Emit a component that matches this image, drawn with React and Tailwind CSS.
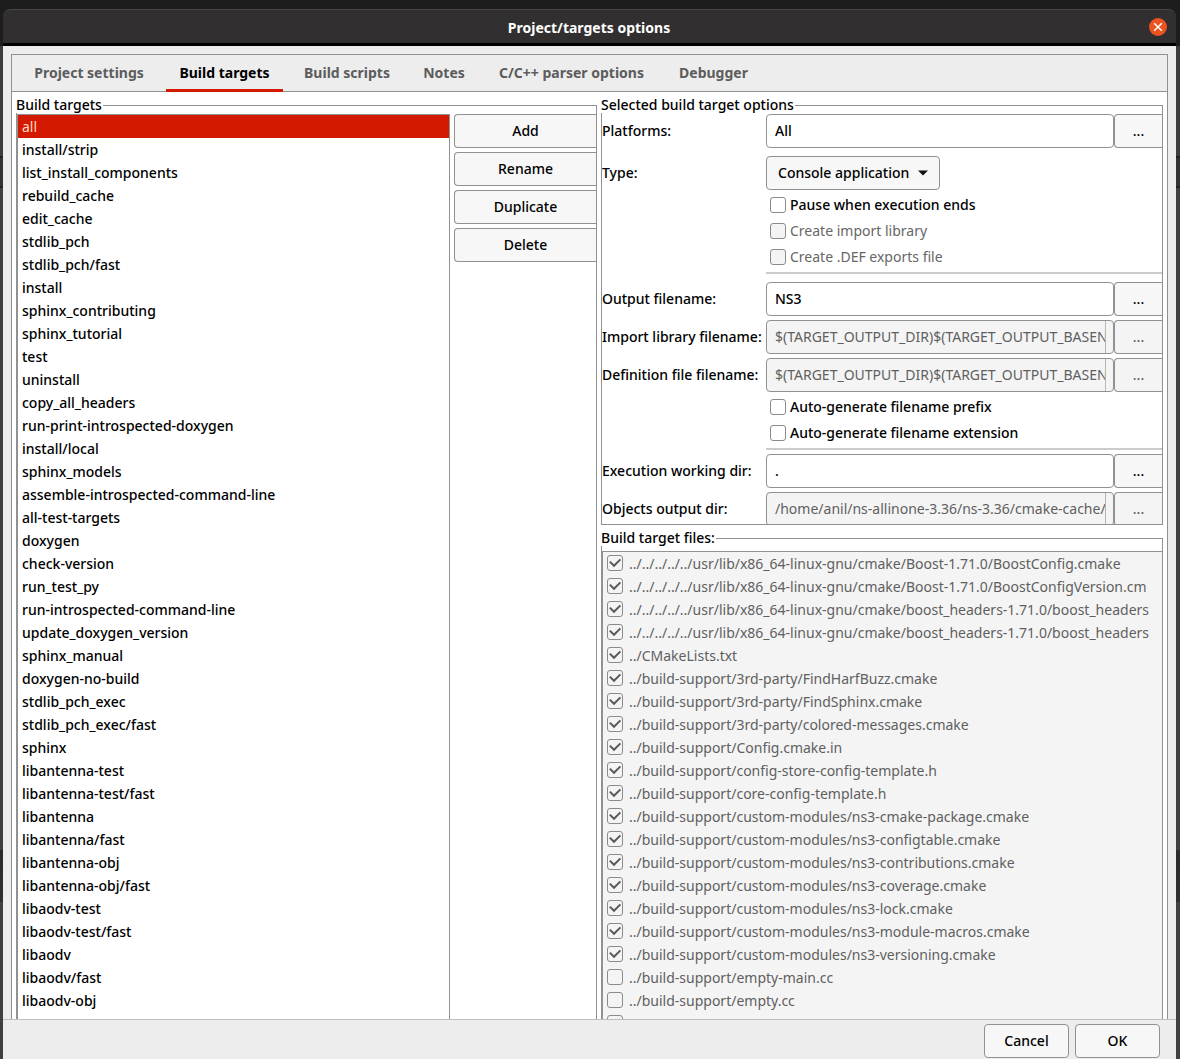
import { useState } from "react";

const TABS = [
  { name: "Project settings", width: "w-[138px]" },
  { name: "Build targets", width: "w-[117px]" },
  { name: "Build scripts", width: "w-[112px]" },
  { name: "Notes", width: "w-[66px]" },
  { name: "C/C++ parser options", width: "w-[173px]" },
  { name: "Debugger", width: "w-[95px]" },
];

const TARGETS = [
  "all", "install/strip", "list_install_components", "rebuild_cache", "edit_cache",
  "stdlib_pch", "stdlib_pch/fast", "install", "sphinx_contributing", "sphinx_tutorial",
  "test", "uninstall", "copy_all_headers", "run-print-introspected-doxygen",
  "install/local", "sphinx_models", "assemble-introspected-command-line",
  "all-test-targets", "doxygen", "check-version", "run_test_py",
  "run-introspected-command-line", "update_doxygen_version", "sphinx_manual",
  "doxygen-no-build", "stdlib_pch_exec", "stdlib_pch_exec/fast", "sphinx",
  "libantenna-test", "libantenna-test/fast", "libantenna", "libantenna/fast",
  "libantenna-obj", "libantenna-obj/fast", "libaodv-test", "libaodv-test/fast",
  "libaodv", "libaodv/fast", "libaodv-obj",
];

const FILES = [
  "../../../../../usr/lib/x86_64-linux-gnu/cmake/Boost-1.71.0/BoostConfig.cmake",
  "../../../../../usr/lib/x86_64-linux-gnu/cmake/Boost-1.71.0/BoostConfigVersion.cm",
  "../../../../../usr/lib/x86_64-linux-gnu/cmake/boost_headers-1.71.0/boost_headers",
  "../../../../../usr/lib/x86_64-linux-gnu/cmake/boost_headers-1.71.0/boost_headers",
  "../CMakeLists.txt",
  "../build-support/3rd-party/FindHarfBuzz.cmake",
  "../build-support/3rd-party/FindSphinx.cmake",
  "../build-support/3rd-party/colored-messages.cmake",
  "../build-support/Config.cmake.in",
  "../build-support/config-store-config-template.h",
  "../build-support/core-config-template.h",
  "../build-support/custom-modules/ns3-cmake-package.cmake",
  "../build-support/custom-modules/ns3-configtable.cmake",
  "../build-support/custom-modules/ns3-contributions.cmake",
  "../build-support/custom-modules/ns3-coverage.cmake",
  "../build-support/custom-modules/ns3-lock.cmake",
  "../build-support/custom-modules/ns3-module-macros.cmake",
  "../build-support/custom-modules/ns3-versioning.cmake",
  "../build-support/empty-main.cc",
  "../build-support/empty.cc",
  "",
];
const UNCHECKED = [18, 19];

function Tick({ id, disabled, checked, label }) {
  return (
    <span className="grid size-4 shrink-0">
      <input
        id={id}
        type="checkbox"
        disabled={disabled}
        defaultChecked={checked}
        aria-label={label}
        className="peer col-start-1 row-start-1 size-4 appearance-none rounded-[3px] border border-[#8b8b8b] bg-white disabled:bg-[#f4f4f4]"
      />
      <svg
        viewBox="0 0 16 16"
        className="pointer-events-none invisible col-start-1 row-start-1 size-4 peer-checked:visible"
        fill="none"
        stroke="#5a5a5a"
        strokeWidth="2"
        aria-hidden="true"
      >
        <path d="M2.8 6.6 7 10.8 13.4 4.4" />
      </svg>
    </span>
  );
}

function CheckRow({ id, disabled, children }) {
  return (
    <div className={"flex h-[26px] items-center gap-1 pl-1 " + (disabled ? "font-normal text-[#666666]" : "")}>
      <Tick id={id} disabled={disabled} />
      <label htmlFor={id}>{children}</label>
    </div>
  );
}

function FieldRow({ id, label, value, disabled }) {
  return (
    <div className="flex h-[34px] items-center">
      <label htmlFor={id} className="w-[164px] shrink-0 whitespace-nowrap">{label}</label>
      <div
        className={
          "flex h-[34px] min-w-0 flex-1 rounded border border-[#919191] pl-2 " +
          (disabled ? "bg-[#f4f4f4] pr-[7px] font-normal text-[#5f5f5f]" : "bg-white pr-2")
        }
      >
        <input
          id={id}
          defaultValue={value}
          disabled={disabled}
          className={"w-full min-w-0 bg-transparent outline-none " + (disabled ? "border-r border-[#b5b5b5]" : "")}
        />
      </div>
      <button
        type="button"
        disabled={disabled}
        aria-label={"Browse: " + label}
        className="h-[34px] w-12 shrink-0 rounded-l border border-r-0 border-[#919191] bg-[#f7f7f7] disabled:bg-[#f4f4f4] disabled:text-[#5f5f5f]"
      >
        ...
      </button>
    </div>
  );
}

function Separator() {
  return <div className="ml-[164px] h-0.5 bg-[#cccccc]" />;
}

function Frame({ title, className, children }) {
  return (
    <fieldset className={"min-w-0 border border-[#919191] " + className}>
      <legend className="-ml-px pr-px leading-4">{title}</legend>
      {children}
    </fieldset>
  );
}

export default function App() {
  const [selected, setSelected] = useState("all");
  const [tab, setTab] = useState("Build targets");

  return (
    <div className="flex h-screen flex-col overflow-hidden bg-[linear-gradient(#1d1d1d_46px,#3d3d3d_46px,#3d3d3d_156px,#222_156px,#222_158px,#333_158px,#333_186px,#222_186px,#222_188px,#3f4040_188px,#3f4040_850px,#2a2a2a_850px,#303030_902px,#3f4040_902px)] pt-[9px] pr-1 pl-[3px] font-['Noto_Sans','Liberation_Sans',sans-serif] text-sm font-medium text-black">
      <header className="grid h-[37px] shrink-0 grid-cols-[1fr_auto_1fr] items-center rounded-t-lg border-t border-b-[3px] border-t-[#484848] border-b-black bg-[#322f30] pr-[9px]">
        <h1 className="col-start-2 pt-0.5 pl-2 font-bold text-white">Project/targets options</h1>
        <button type="button" aria-label="Close" className="flex size-[18px] items-center justify-center justify-self-end rounded-full bg-[#e95420]">
          <svg viewBox="0 0 10 10" className="size-[10px]" stroke="#fff" strokeWidth="1.5" aria-hidden="true">
            <path d="M1.2 1.2 8.8 8.8M8.8 1.2 1.2 8.8" />
          </svg>
        </button>
      </header>

      <main className="flex min-h-0 flex-1 flex-col bg-[#ededed] px-2 pt-2">
        <div className="flex min-h-0 flex-1 flex-col border border-b-0 border-[#919191]">
          <div role="tablist" className="flex h-[37px] shrink-0 gap-2 border-b border-[#919191] pl-2">
            {TABS.map((t) => (
              <button
                key={t.name}
                type="button"
                role="tab"
                aria-selected={tab === t.name}
                onClick={() => setTab(t.name)}
                className={
                  "-mb-px h-[37px] border-b-[3px] pt-px font-bold whitespace-nowrap " +
                  t.width +
                  (tab === t.name ? " border-[#d31900] text-black" : " border-transparent text-[#5c5c5c]")
                }
              >
                {t.name}
              </button>
            ))}
          </div>

          <div className="grid min-h-0 flex-1 grid-cols-[581fr_562fr] grid-rows-[minmax(0,1fr)] gap-1 bg-white px-1 pt-[5px]">
            <Frame title="Build targets" className="border-b-0">
              <div className="flex h-full gap-1 pt-px">
                <ul role="listbox" aria-label="Build targets" className="min-w-0 flex-1 overflow-hidden border border-b-0 border-[#919191]">
                  {TARGETS.map((t) => (
                    <li
                      key={t}
                      role="option"
                      aria-selected={selected === t}
                      onClick={() => setSelected(t)}
                      className={
                        "h-[23px] pl-1 leading-[23px] whitespace-nowrap " +
                        (selected === t ? "bg-[#d31900] font-normal text-[#ffd9c4]" : "")
                      }
                    >
                      {t}
                    </li>
                  ))}
                </ul>
                <div className="flex w-[142px] shrink-0 flex-col gap-1">
                  {["Add", "Rename", "Duplicate", "Delete"].map((b) => (
                    <button key={b} type="button" className="h-[34px] rounded-l border border-r-0 border-[#919191] bg-[#f7f7f7]">
                      {b}
                    </button>
                  ))}
                </div>
              </div>
            </Frame>

            <div className="flex min-h-0 min-w-0 flex-col gap-[5px]">
              <Frame title="Selected build target options" className="shrink-0">
                <div className="h-[411px] overflow-hidden">
                  <div className="flex flex-col gap-2 pt-px">
                    <FieldRow id="platforms" label="Platforms:" value="All" />
                    <div className="flex items-center">
                      <label htmlFor="type" className="w-[164px] shrink-0">Type:</label>
                      <div className="grid w-[174px] items-center">
                        <select id="type" className="col-start-1 row-start-1 h-[34px] appearance-none rounded border border-[#919191] bg-[#f7f7f7] pl-[11px]">
                          <option>Console application</option>
                        </select>
                        <svg viewBox="0 0 10 6" className="pointer-events-none col-start-1 row-start-1 mr-3 h-[6px] w-[10px] justify-self-end" aria-hidden="true">
                          <path d="M0 0.5h10L5 5.5z" fill="#111" />
                        </svg>
                      </div>
                    </div>
                  </div>
                  <div className="mt-0.5 mb-0.5 ml-[164px]">
                    <CheckRow id="pause">Pause when execution ends</CheckRow>
                    <CheckRow id="implib" disabled>Create import library</CheckRow>
                    <CheckRow id="def" disabled>Create .DEF exports file</CheckRow>
                  </div>
                  <Separator />
                  <div className="mt-2 flex flex-col gap-1">
                    <FieldRow id="output" label="Output filename:" value="NS3" />
                    <FieldRow id="import" label="Import library filename:" value="$(TARGET_OUTPUT_DIR)$(TARGET_OUTPUT_BASENAME)" disabled />
                    <FieldRow id="definition" label="Definition file filename:" value="$(TARGET_OUTPUT_DIR)$(TARGET_OUTPUT_BASENAME)" disabled />
                  </div>
                  <div className="mt-0.5 mb-0.5 ml-[164px]">
                    <CheckRow id="prefix">Auto-generate filename prefix</CheckRow>
                    <CheckRow id="extension">Auto-generate filename extension</CheckRow>
                  </div>
                  <Separator />
                  <div className="mt-1 flex flex-col gap-1">
                    <FieldRow id="workdir" label="Execution working dir:" value="." />
                    <FieldRow id="objdir" label="Objects output dir:" value="/home/anil/ns-allinone-3.36/ns-3.36/cmake-cache/" disabled />
                  </div>
                </div>
              </Frame>

              <Frame title="Build target files:" className="min-h-0 flex-1 border-b-0">
                <div className="h-full pt-[5px]">
                  <ul className="h-full overflow-hidden border-t border-l border-[#919191] bg-[#f4f4f4] font-normal text-[#5f5f5f]">
                    {FILES.map((f, i) => (
                      <li key={i} className="flex h-[23px] gap-1.5 pt-[3px] pl-1 leading-[18px] whitespace-nowrap">
                        <Tick id={"file" + i} disabled checked={!UNCHECKED.includes(i)} label={f ? undefined : "File"} />
                        {f && <label htmlFor={"file" + i}>{f}</label>}
                      </li>
                    ))}
                  </ul>
                </div>
              </Frame>
            </div>
          </div>
        </div>
      </main>

      <footer className="flex h-10 shrink-0 justify-end gap-1.5 border-t border-[#bfbfbf] bg-[#ededed] pt-1 pr-4">
        <button type="button" className="h-[34px] w-[85px] rounded border border-[#919191] bg-[#f7f7f7]">Cancel</button>
        <button type="button" className="h-[34px] w-[85px] rounded border border-[#919191] bg-[#f7f7f7]">OK</button>
      </footer>
    </div>
  );
}
